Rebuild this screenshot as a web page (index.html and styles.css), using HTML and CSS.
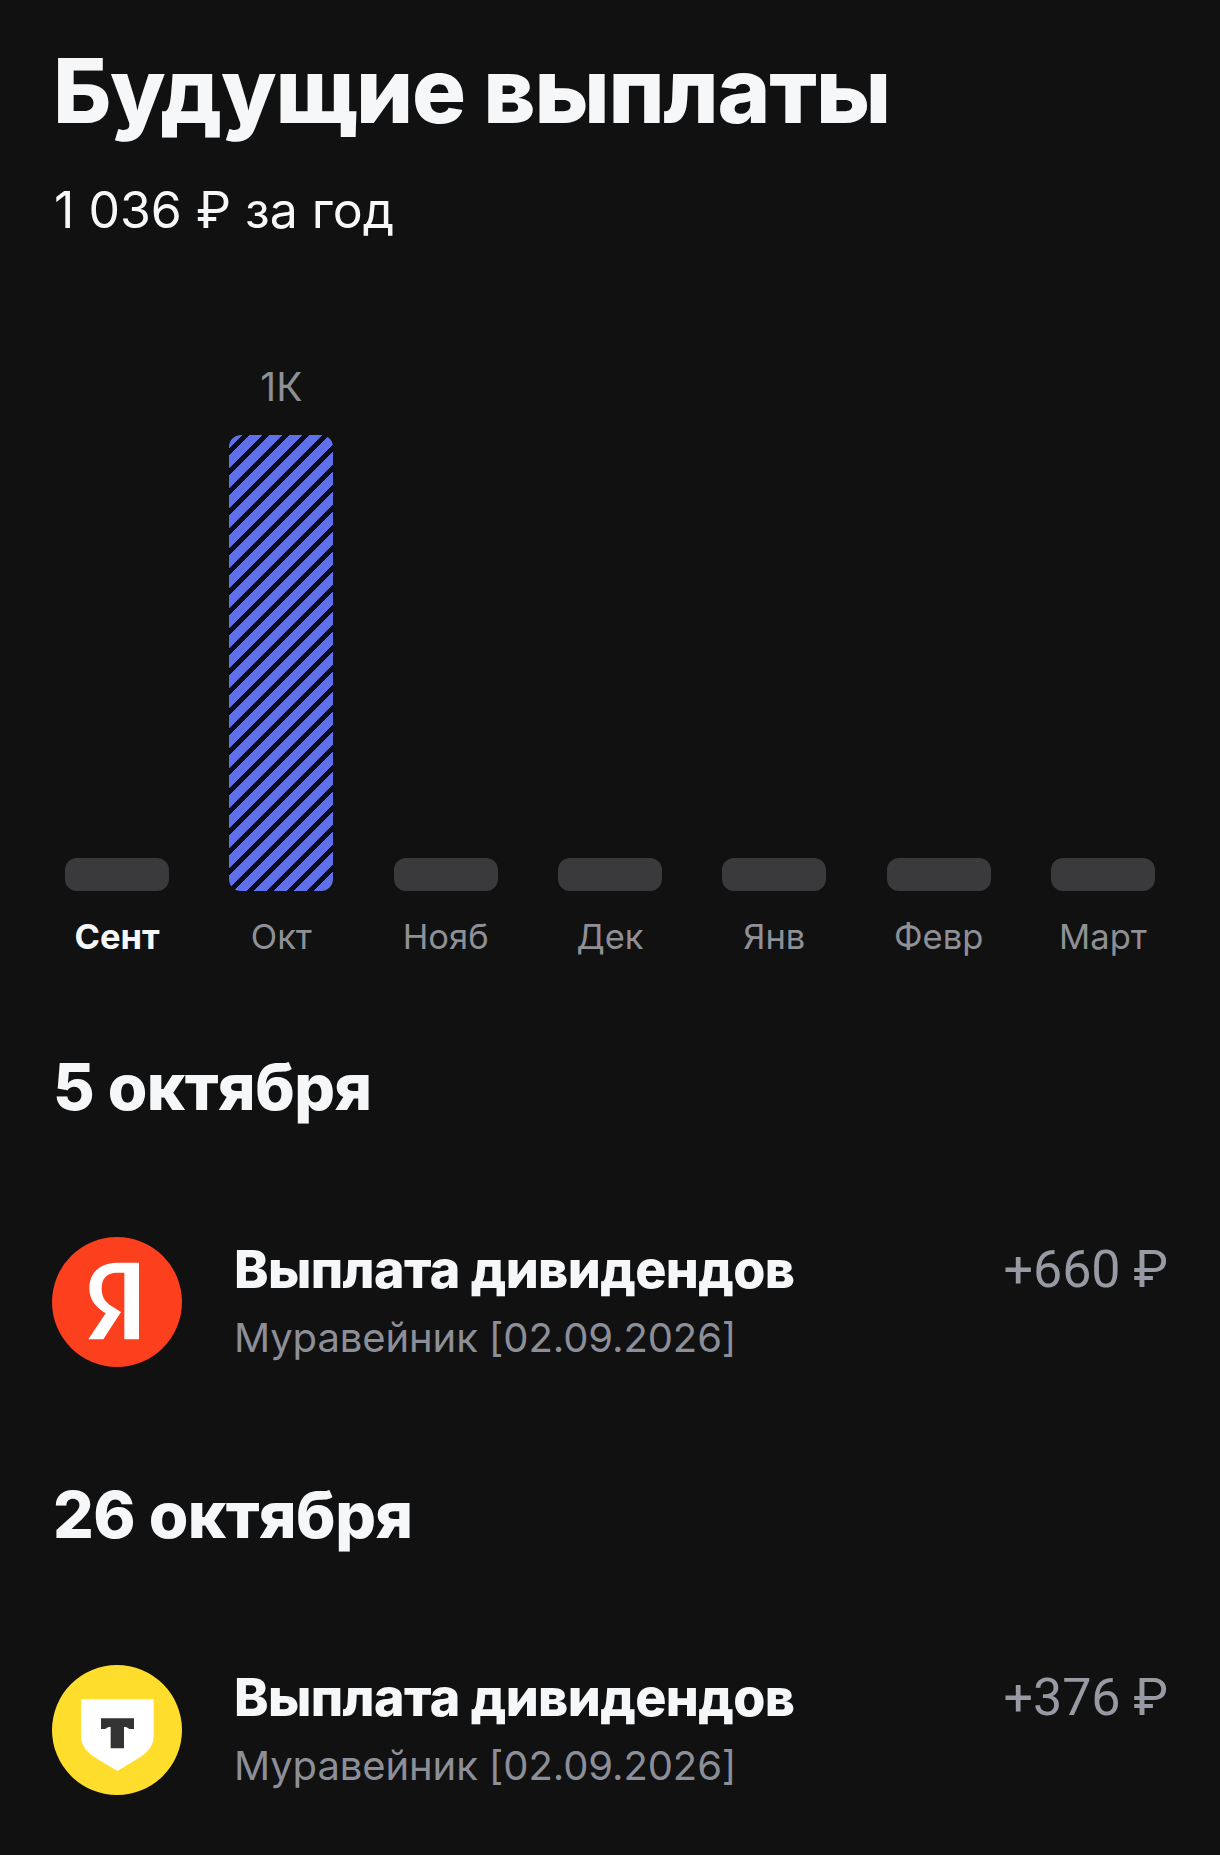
FILE: index.html
```html
<!doctype html>
<html lang="ru">
<head>
    <meta charset="UTF-8">
    <title>Будущие выплаты</title>
    <link rel="stylesheet" href="styles.css">
</head>
<body>
<main class="page">
    <h1 class="title">Будущие выплаты</h1>
    <p class="total">1 036 ₽ за год</p>

    <div class="chart">
        <div class="col">
            <div class="bar"></div>
            <span class="month active">Сент</span>
        </div>
        <div class="col">
            <span class="bar-value">1К</span>
            <div class="bar striped"></div>
            <span class="month">Окт</span>
        </div>
        <div class="col">
            <div class="bar"></div>
            <span class="month">Нояб</span>
        </div>
        <div class="col">
            <div class="bar"></div>
            <span class="month">Дек</span>
        </div>
        <div class="col">
            <div class="bar"></div>
            <span class="month">Янв</span>
        </div>
        <div class="col">
            <div class="bar"></div>
            <span class="month">Февр</span>
        </div>
        <div class="col">
            <div class="bar"></div>
            <span class="month">Март</span>
        </div>
    </div>

    <h2 class="date">5 октября</h2>
    <div class="payment">
        <svg class="logo" viewBox="36 51 390 390">
            <circle cx="231" cy="246" r="195" fill="#fc3f1d"/>
            <path fill="#fff" d="M297 358H253V158H232C198 158 185 178 185 205C185 235 198 250 225 265L243 276L190 358H145L197 280C168 262 148 240 148 205C148 160 178 128 232 128H297Z"/>
        </svg>
        <div class="info">
            <div class="info-title">Выплата дивидендов</div>
            <div class="info-sub">Муравейник [02.09.2026]</div>
        </div>
        <div class="amount">+660 ₽</div>
    </div>

    <h2 class="date">26 октября</h2>
    <div class="payment">
        <svg class="logo" viewBox="36 45 390 390">
            <circle cx="231" cy="240" r="195" fill="#ffdd2d"/>
            <path fill="#fff" d="M123 148H341V255C341 285 328 303 300 322L232 363L164 322C136 303 123 285 123 255Z"/>
            <path fill="#333" d="M183 205H282V237H268C262 232 258 231 252 231V295H212V231C206 231 202 232 196 237H183Z"/>
        </svg>
        <div class="info">
            <div class="info-title">Выплата дивидендов</div>
            <div class="info-sub">Муравейник [02.09.2026]</div>
        </div>
        <div class="amount">+376 ₽</div>
    </div>
</main>
</body>
</html>
```

FILE: styles.css
```css
* {
    box-sizing: border-box;
}
body {
    margin: 0;
    background: #111112;
    color: #f6f7f8;
    font-family: "Inter", "Noto Sans", sans-serif;
}
.page {
    height: 1855px;
    overflow: hidden;
    padding: 36px 52px 0 53px;
}
.title {
    margin: 0;
    font-size: 90px;
    font-weight: 800;
    letter-spacing: -1.2px;
    line-height: 110px;
}
.total {
    margin: 34px 0 0 1px;
    font-size: 50px;
    line-height: 60px;
}
.chart {
    display: flex;
    justify-content: space-between;
    align-items: flex-end;
    margin: 0 13px 88px 12px;
    height: 719px;
}
.col {
    display: flex;
    flex-direction: column;
    align-items: center;
    width: 104px;
}
.bar {
    width: 100%;
    height: 33px;
    border-radius: 12px;
    background: #3a3a3c;
}
.bar.striped {
    height: 456px;
    background: repeating-linear-gradient(135deg, #0a0c1c 0, #0a0c1c 0.7px, #5f70e8 0.7px, #5f70e8 9.8px, #0a0c1c 9.8px, #0a0c1c 14.14px);
}
.bar-value {
    margin-bottom: 28px;
    font-size: 39px;
    line-height: 40px;
    color: #8e9096;
}
.month {
    margin-top: 24px;
    font-size: 34.5px;
    line-height: 44px;
    white-space: nowrap;
    color: #8e9096;
}
.month.active {
    font-weight: 700;
    color: #f6f7f8;
}
.date {
    margin: 0;
    font-size: 64px;
    font-weight: 800;
    letter-spacing: -0.5px;
    line-height: 80px;
}
.payment {
    display: flex;
    align-items: flex-start;
    margin-left: -1px;
    padding: 110px 0 102px 0;
}
.logo {
    flex: none;
    width: 130px;
    height: 130px;
    margin-right: 52px;
}
.info {
    flex: 1;
    padding-top: 1px;
}
.info-title {
    font-size: 52px;
    font-weight: 800;
    letter-spacing: -0.6px;
    line-height: 64px;
}
.info-sub {
    font-size: 40px;
    letter-spacing: -0.1px;
    line-height: 71px;
    color: #8d8f98;
}
.amount {
    font-family: "Roboto", "Inter", sans-serif;
    font-size: 52px;
    line-height: 66px;
    color: #989aa3;
}
```
